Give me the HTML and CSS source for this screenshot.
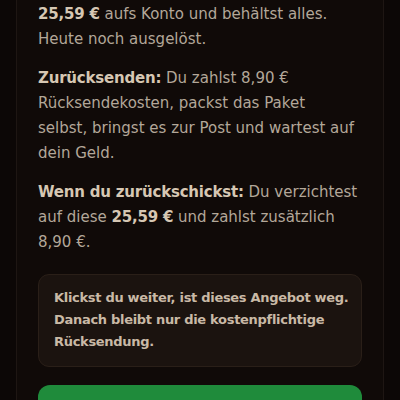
FILE: index.html
```html
<!DOCTYPE html>
<html lang="de">
<head>
<meta charset="utf-8">
<link rel="stylesheet" href="styles.css">
</head>
<body>
<main class="card">
  <p class="para first"><strong>25,59 €</strong> aufs Konto und behältst alles.<br>Heute noch ausgelöst.</p>
  <p class="para"><strong>Zurücksenden:</strong> Du zahlst 8,90 €<br>Rücksendekosten, packst das Paket<br>selbst, bringst es zur Post und wartest auf<br>dein Geld.</p>
  <p class="para"><strong>Wenn du zurückschickst:</strong> Du verzichtest<br>auf diese <strong>25,59 €</strong> und zahlst zusätzlich<br>8,90 €.</p>
  <div class="notice">Klickst du weiter, ist dieses Angebot weg.<br>Danach bleibt nur die kostenpflichtige<br>Rücksendung.</div>
  <button class="cta" type="button">Angebot annehmen</button>
</main>
</body>
</html>
```
FILE: styles.css
```css
html, body {
  margin: 0;
  padding: 0;
  background: #0c0706;
  height: 100%;
  overflow: hidden;
}
body {
  font-family: "DejaVu Sans", "Open Sans", sans-serif;
  color: #b3a799;
}
.card {
  margin: 0 16px;
  border-left: 1px solid #1e1613;
  border-right: 1px solid #1e1613;
  background: #100a08;
  padding: 2px 21px 0;
  min-height: 100%;
  box-sizing: border-box;
}
.para {
  margin: 0 0 13px;
  font-size: 15px;
  line-height: 25.3px;
  white-space: nowrap;
}
.para strong {
  color: #d6c7b3;
  font-weight: 700;
  letter-spacing: -0.2px;
}
.notice {
  margin-top: 18px;
  background: #1b130f;
  border: 1px solid #2a1f18;
  border-radius: 11px;
  padding: 12px 15px 13px;
  font-size: 13px;
  font-weight: 700;
  line-height: 22px;
  letter-spacing: -0.3px;
  color: #c9b9a6;
  white-space: nowrap;
}
.cta {
  display: block;
  width: 100%;
  margin-top: 18px;
  height: 60px;
  border: 0;
  border-radius: 12px;
  background: #1f8b3b;
  color: #e9f6ea;
  font-family: inherit;
  font-size: 16px;
  font-weight: 700;
}
```
